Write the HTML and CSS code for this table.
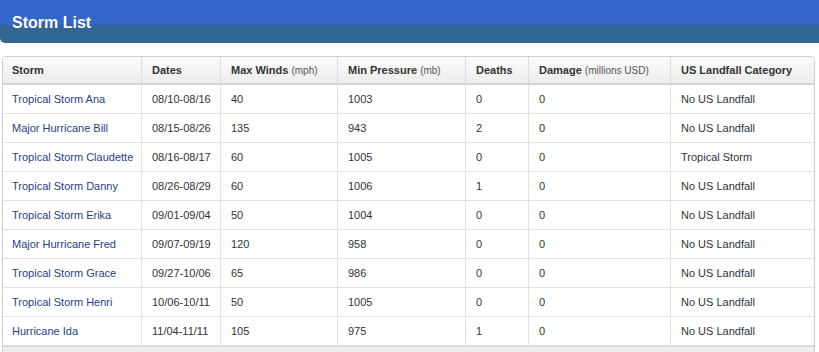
FILE: index.html
```html
<!DOCTYPE html>
<html>
<head>
<meta charset="utf-8">
<link rel="stylesheet" href="styles.css">
</head>
<body>
<div class="titlebar"><h1 class="title">Storm List</h1></div>
<div class="tablewrap">
<table class="storms">
<thead>
<tr>
<th class="c1">Storm</th>
<th class="c2">Dates</th>
<th class="c3">Max Winds <span class="unit">(mph)</span></th>
<th class="c4">Min Pressure <span class="unit">(mb)</span></th>
<th class="c5">Deaths</th>
<th class="c6">Damage <span class="unit">(millions USD)</span></th>
<th class="c7">US Landfall Category</th>
</tr>
</thead>
<tbody>
<tr><td><a href="#">Tropical Storm Ana</a></td><td>08/10-08/16</td><td>40</td><td>1003</td><td>0</td><td>0</td><td>No US Landfall</td></tr>
<tr><td><a href="#">Major Hurricane Bill</a></td><td>08/15-08/26</td><td>135</td><td>943</td><td>2</td><td>0</td><td>No US Landfall</td></tr>
<tr><td><a href="#">Tropical Storm Claudette</a></td><td>08/16-08/17</td><td>60</td><td>1005</td><td>0</td><td>0</td><td>Tropical Storm</td></tr>
<tr><td><a href="#">Tropical Storm Danny</a></td><td>08/26-08/29</td><td>60</td><td>1006</td><td>1</td><td>0</td><td>No US Landfall</td></tr>
<tr><td><a href="#">Tropical Storm Erika</a></td><td>09/01-09/04</td><td>50</td><td>1004</td><td>0</td><td>0</td><td>No US Landfall</td></tr>
<tr><td><a href="#">Major Hurricane Fred</a></td><td>09/07-09/19</td><td>120</td><td>958</td><td>0</td><td>0</td><td>No US Landfall</td></tr>
<tr><td><a href="#">Tropical Storm Grace</a></td><td>09/27-10/06</td><td>65</td><td>986</td><td>0</td><td>0</td><td>No US Landfall</td></tr>
<tr><td><a href="#">Tropical Storm Henri</a></td><td>10/06-10/11</td><td>50</td><td>1005</td><td>0</td><td>0</td><td>No US Landfall</td></tr>
<tr><td><a href="#">Hurricane Ida</a></td><td>11/04-11/11</td><td>105</td><td>975</td><td>1</td><td>0</td><td>No US Landfall</td></tr>
</tbody>
</table>
<div class="tablefoot"></div>
</div>
</body>
</html>
```
FILE: styles.css
```css
html, body {
  margin: 0;
  padding: 0;
  background: #ffffff;
}
body {
  font-family: "Liberation Sans", Arial, sans-serif;
  font-size: 11px;
  color: #333333;
  width: 819px;
  height: 352px;
  overflow: hidden;
}
.titlebar {
  height: 43px;
  margin-right: -10px;
  border-bottom-left-radius: 5px;
  background: linear-gradient(to bottom, #3266cb 0, #3266cb 25px, #326795 25px, #336693 43px);
  display: flex;
  align-items: center;
  padding-left: 12px;
  padding-top: 2px;
  box-sizing: border-box;
}
.title {
  margin: 0;
  color: #ffffff;
  font-size: 16px;
  font-weight: bold;
  text-shadow: 0 0 1px rgba(0,0,0,0.3);
}
.tablewrap {
  margin: 13px 0 0 2px;
  width: 811px;
  border: 1px solid #cfcfcf;
  border-radius: 4px 4px 0 0;
  overflow: hidden;
}
.storms {
  border-collapse: collapse;
  width: 100%;
  table-layout: fixed;
}
.storms th {
  height: 26px;
  text-align: left;
  font-weight: bold;
  font-size: 11px;
  color: #333333;
  padding: 0 10px;
  background: linear-gradient(to bottom, #fbfbfb 0%, #ececec 100%);
  border-left: 1px solid #dddddd;
  border-bottom: 2px solid #d4d4d4;
}
.storms th:first-child, .storms td:first-child {
  border-left: none;
  padding-left: 9px;
}
.storms .unit {
  font-weight: normal;
  font-size: 10px;
  color: #555555;
}
.storms td {
  height: 28px;
  padding: 0 10px;
  border-left: 1px solid #e2e2e2;
  border-bottom: 1px solid #e2e2e2;
  color: #333333;
  white-space: nowrap;
}
.storms a {
  color: #1f3f82;
  text-decoration: none;
}
.c1 { width: 119px; }
.c2 { width: 58px; }
.c3 { width: 96px; }
.c4 { width: 107px; }
.c5 { width: 42px; }
.c6 { width: 121px; }
.c7 { width: auto; }
.tablefoot {
  height: 8px;
  background: #eeeeee;
  border-top: 1px solid #d8d8d8;
}
```
